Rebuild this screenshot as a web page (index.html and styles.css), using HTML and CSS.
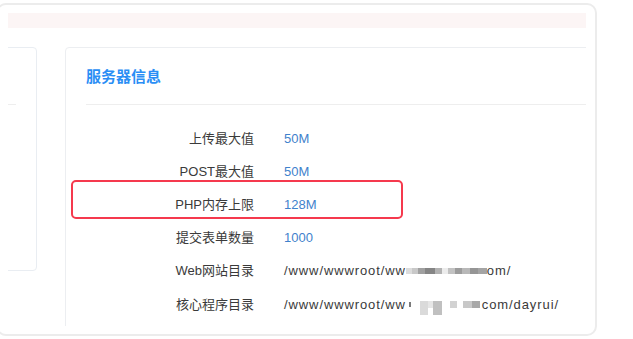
FILE: index.html
```html
<!DOCTYPE html>
<html lang="zh">
<head>
<meta charset="utf-8">
<title>服务器信息</title>
<link rel="stylesheet" href="styles.css">
</head>
<body>
<div class="frame">
  <div class="viewport">
    <div class="alert"></div>
    <div class="panels">
      <div class="card card-left">
        <div class="card-head"></div>
      </div>
      <div class="card card-right">
        <div class="card-head"><h3 class="title">服务器信息</h3></div>
        <div class="rows">
          <div class="row"><span class="label">上传最大值</span><span class="value num">50M</span></div>
          <div class="row"><span class="label">POST最大值</span><span class="value num">50M</span></div>
          <div class="row row-marked"><span class="label">PHP内存上限</span><span class="value num">128M</span><div class="highlight"></div></div>
          <div class="row"><span class="label">提交表单数量</span><span class="value num">1000</span></div>
          <div class="row"><span class="label">Web网站目录</span><span class="value path">/www/wwwroot/ww<svg class="mosaic" width="81" height="16" viewBox="0 0 81 16"><rect x="0" y="5" width="6" height="6" fill="#dcdcdc"/><rect x="6" y="5" width="6" height="6" fill="#c8c8c8"/><rect x="12" y="5" width="7" height="6" fill="#a0a0a0"/><rect x="19" y="5" width="10" height="6" fill="#858585"/><rect x="29" y="5" width="7" height="6" fill="#b2b2b2"/><rect x="36" y="5" width="6" height="6" fill="#ececec"/><rect x="42" y="5" width="7" height="6" fill="#c2c2c2"/><rect x="49" y="5" width="7" height="6" fill="#9c9c9c"/><rect x="56" y="5" width="8" height="6" fill="#b8b8b8"/><rect x="64" y="5" width="8" height="6" fill="#959595"/><rect x="72" y="5" width="9" height="6" fill="#a4a4a4"/></svg>om/</span></div>
          <div class="row"><span class="label">核心程序目录</span><span class="value path">/www/wwwroot/ww<svg class="mosaic" width="76" height="20" viewBox="0 0 76 20"><rect x="3" y="7" width="2" height="5" fill="#7a7a7a"/><rect x="14" y="6" width="8" height="14" fill="#dadada"/><rect x="22" y="6" width="5" height="7" fill="#e6e6e6"/><rect x="27" y="6" width="9" height="14" fill="#c0c0c0"/><rect x="44" y="6" width="7" height="7" fill="#d2d2d2"/><rect x="57" y="6" width="9" height="7" fill="#c8c8c8"/><rect x="66" y="6" width="8" height="7" fill="#a8a8a8"/></svg>com/dayrui/</span></div>
        </div>
      </div>
    </div>
  </div>
</div>
</body>
</html>
```

FILE: styles.css
```css
html, body {
  margin: 0;
  padding: 0;
  background: #ffffff;
}
body {
  font-family: "Liberation Sans", "Noto Sans CJK SC", sans-serif;
  color: #333333;
  overflow: hidden;
}
.frame {
  box-sizing: border-box;
  margin: 3px 0 0 -4px;
  width: 601px;
  height: 333px;
  border: 2px solid #ececec;
  border-radius: 10px;
  padding: 8px 9px 8px 10px;
  background: #ffffff;
}
.viewport {
  height: 100%;
  overflow: hidden;
}
.alert {
  height: 15px;
  background: #fcf5f5;
  margin-bottom: 19px;
}
.panels {
  display: flex;
  gap: 28px;
  margin-left: -192px;
}
.card {
  box-sizing: border-box;
  border: 1px solid #e9edf2;
  border-radius: 4px;
  background: #ffffff;
  padding: 0 20px;
  flex: none;
}
.card-left {
  width: 221px;
  height: 224px;
}
.card-right {
  width: 580px;
  height: 320px;
  border-color: #eceef1;
}
.card-head {
  box-sizing: border-box;
  height: 57px;
  border-bottom: 1px solid #eeeeee;
  padding-top: 18px;
}
.title {
  margin: 0;
  font-size: 15px;
  line-height: 22px;
  font-weight: bold;
  color: #2a8ef5;
}
.rows {
  padding-top: 17px;
}
.row {
  display: flex;
  align-items: center;
  height: 33.2px;
  font-size: 13px;
  line-height: 20px;
}
.row-marked {
  position: relative;
}
.label {
  width: 168px;
  flex: none;
  text-align: right;
  color: #3a3a3a;
}
.value {
  margin-left: 30px;
  display: flex;
  align-items: center;
  white-space: nowrap;
}
.num {
  color: #3f82cc;
}
.path {
  color: #3a3a3a;
  letter-spacing: 0.9px;
}
.mosaic {
  display: block;
  flex: none;
}
.highlight {
  position: absolute;
  left: -15px;
  top: -8px;
  width: 332px;
  height: 39px;
  box-sizing: border-box;
  border: 2px solid #f5394d;
  border-radius: 5px;
}
```
